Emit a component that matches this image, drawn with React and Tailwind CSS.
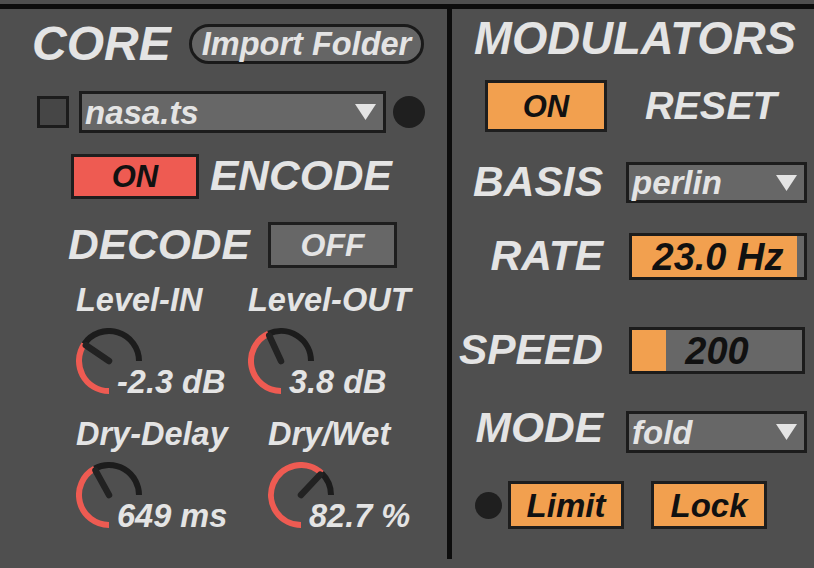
import React from 'react';

const FONT = { fontFamily: '"Liberation Sans", Arial, sans-serif' };

// knob: 270° sweep starting at 6 o'clock, clockwise to 3 o'clock
const Knob = ({ value }) => {
  const c = 33;
  const r = 30;
  const pt = (deg, rad = r) => {
    const a = (deg * Math.PI) / 180;
    return [c + rad * Math.sin(a), c - rad * Math.cos(a)];
  };
  const arc = (from, to) => {
    const [x1, y1] = pt(from);
    const [x2, y2] = pt(to);
    const large = to - from > 180 ? 1 : 0;
    return `M ${x1} ${y1} A ${r} ${r} 0 ${large} 1 ${x2} ${y2}`;
  };
  const v = 180 + 270 * value;
  const [px, py] = pt(v, 28);

  return (
    <svg width="66" height="66" viewBox="0 0 66 66" className="shrink-0">
      <path d={arc(v, 450)} fill="none" stroke="#1c1c1c" strokeWidth="6" />
      <path d={arc(180, v)} fill="none" stroke="#ee5b52" strokeWidth="6" />
      <line x1={c} y1={c} x2={px} y2={py} stroke="#222222" strokeWidth="6.5" strokeLinecap="round" />
    </svg>
  );
};

const KnobGroup = ({ label, value, text, className }) => (
  <div className={`flex flex-col ${className}`}>
    <div className="h-[32px] flex items-center text-[32.5px] leading-none text-[#e4e4e4] whitespace-nowrap">{label}</div>
    <div className="mt-[12px] flex items-end h-[66px]">
      <Knob value={value} />
      <span className="ml-[-25px] mb-[-4px] text-[32.5px] leading-none text-[#e4e4e4] whitespace-nowrap">{text}</span>
    </div>
  </div>
);

const Arrow = () => (
  <svg width="21" height="16" viewBox="0 0 21 16" className="shrink-0">
    <polygon points="0,0 21,0 10.5,16" fill="#e4e4e4" />
  </svg>
);

const Menu = ({ text, className, size = 'text-[33px]' }) => (
  <div className={`flex items-center justify-between border-[3px] border-[#1c1c1c] bg-[#676767] pl-[3px] pr-[7px] ${className}`}>
    <span className={`${size} leading-none text-[#e4e4e4]`}>{text}</span>
    <Arrow />
  </div>
);

const Toggle = ({ text, className }) => (
  <div className={`flex items-center justify-center border-[3px] border-[#1e1e1e] leading-none ${className}`}>
    {text}
  </div>
);

const Label = ({ children }) => (
  <div className="w-[151px] shrink-0 text-right text-[42.5px] leading-none text-[#e4e4e4]">{children}</div>
);

export default function App() {
  return (
    <div className="w-[814px] h-[568px] bg-[#4f4f4f] overflow-hidden pt-[4px] font-bold italic" style={FONT}>
      <div className="flex border-t-[5px] border-[#0d0d0d]">
        {/* CORE */}
        <div className="w-[447px] shrink-0 flex flex-col">
          <div className="mt-[15px] h-[40px] flex items-center">
            <div className="ml-[32px] w-[157px] text-[48px] leading-none text-[#e4e4e4]">CORE</div>
            <div className="w-[235px] h-[40px] rounded-full border-[3px] border-[#1a1a1a] bg-[#656565] flex items-center justify-center text-[32.5px] leading-none text-[#e4e4e4]">
              Import Folder
            </div>
          </div>

          <div className="mt-[27px] h-[42px] flex items-center">
            <div className="ml-[37px] w-[32px] h-[32px] border-[3px] border-[#1c1c1c] bg-[#464646]" />
            <Menu text="nasa.ts" className="ml-[10px] w-[307px] h-[42px]" />
            <div className="ml-[7px] w-[32px] h-[32px] rounded-full bg-[#1f1f1f]" />
          </div>

          <div className="mt-[21px] h-[45px] flex items-center">
            <Toggle text="ON" className="ml-[71px] w-[128px] h-[45px] bg-[#ee5b52] text-[#111111] text-[31px]" />
            <div className="ml-[11px] text-[42.5px] leading-none text-[#e4e4e4]">ENCODE</div>
          </div>

          <div className="mt-[23px] h-[46px] flex items-center">
            <div className="ml-[68px] w-[200px] text-[42.5px] leading-none text-[#e4e4e4]">DECODE</div>
            <Toggle text="OFF" className="w-[129px] h-[46px] bg-[#676767] text-[#e4e4e4] text-[32px]" />
          </div>

          <div className="mt-[16px] flex ml-[76px]">
            <KnobGroup label="Level-IN" value={0.46} text="-2.3 dB" className="w-[172px]" />
            <KnobGroup label="Level-OUT" value={0.575} text="3.8 dB" />
          </div>

          <div className="mt-[24px] flex ml-[76px]">
            <KnobGroup label="Dry-Delay" value={0.56} text="649 ms" className="w-[192px]" />
            <KnobGroup label="Dry/Wet" value={0.827} text="82.7 %" />
          </div>
        </div>

        <div className="w-[5px] h-[550px] shrink-0 bg-[#0d0d0d]" />

        {/* MODULATORS */}
        <div className="flex-1 flex flex-col">
          <div className="mt-[8px] h-[44px] flex items-center pl-[22px] text-[45.5px] leading-none text-[#e4e4e4]">
            MODULATORS
          </div>

          <div className="mt-[19px] h-[52px] flex items-center">
            <Toggle text="ON" className="ml-[33px] w-[122px] h-[52px] bg-[#f2a04f] text-[#111111] text-[31px]" />
            <div className="ml-[38px] text-[39.5px] leading-none text-[#e4e4e4]">RESET</div>
          </div>

          <div className="mt-[30px] h-[41px] flex items-center">
            <Label>BASIS</Label>
            <Menu text="perlin" className="ml-[23px] w-[181px] h-[41px]" />
          </div>

          <div className="mt-[30px] h-[47px] flex items-center">
            <Label>RATE</Label>
            <div className="ml-[26px] w-[178px] h-[47px] border-[3px] border-[#1c1c1c] bg-[#676767] flex">
              <div className="relative flex-1 flex">
                <div className="w-[96%] bg-[#f2a04f]" />
                <span className="absolute inset-0 flex items-center justify-center text-[38px] leading-none text-[#111111]">23.0 Hz</span>
              </div>
            </div>
          </div>

          <div className="mt-[47px] h-[47px] flex items-center">
            <Label>SPEED</Label>
            <div className="ml-[26px] w-[176px] h-[47px] border-[3px] border-[#1c1c1c] bg-[#676767] flex">
              <div className="relative flex-1 flex">
                <div className="w-[20%] bg-[#f2a04f]" />
                <span className="absolute inset-0 flex items-center justify-center text-[38px] leading-none text-[#111111]">200</span>
              </div>
            </div>
          </div>

          <div className="mt-[37px] h-[42px] flex items-center">
            <div className="mb-[8px]">
              <Label>MODE</Label>
            </div>
            <Menu text="fold" className="ml-[23px] w-[181px] h-[42px]" />
          </div>

          <div className="mt-[28px] h-[48px] flex items-center">
            <div className="ml-[23px] w-[27px] h-[27px] rounded-full bg-[#1f1f1f]" />
            <Toggle text="Limit" className="ml-[6px] w-[116px] h-[48px] bg-[#f2a04f] text-[#111111] text-[33px]" />
            <Toggle text="Lock" className="ml-[27px] w-[116px] h-[48px] bg-[#f2a04f] text-[#111111] text-[33px]" />
          </div>
        </div>
      </div>
    </div>
  );
}
